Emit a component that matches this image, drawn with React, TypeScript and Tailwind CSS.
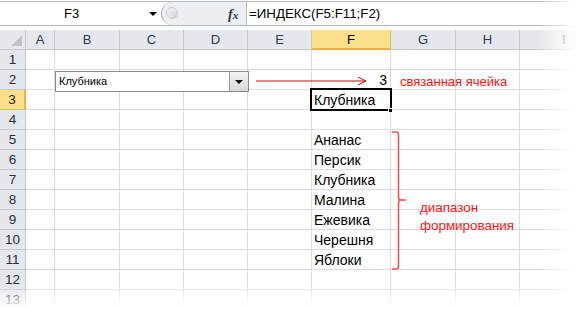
import React from 'react';

const widths = ['w-[26px]', 'w-[29px]', 'w-[65px]', 'w-[64px]', 'w-[64px]', 'w-[64px]', 'w-[79px]', 'w-[65px]', 'w-[64px]', 'flex-1'];
const cols = ['A', 'B', 'C', 'D', 'E', 'F', 'G', 'H', 'I'];
const fvals: Record<number, string> = {
  3: 'Клубника',
  5: 'Ананас',
  6: 'Персик',
  7: 'Клубника',
  8: 'Малина',
  9: 'Ежевика',
  10: 'Черешня',
  11: 'Яблоки',
};

function HeaderRow() {
  return (
    <div className="flex h-[20px] shrink-0">
      <div className={`${widths[0]} shrink-0 h-full bg-[#e4e7ec] border-r border-b border-[#c5cad1] relative`}>
        <div className="absolute right-[3px] bottom-[3px] w-0 h-0 border-l-[11px] border-l-transparent border-b-[11px] border-b-[#c0c4ca]" />
      </div>
      {cols.map((c, i) => (
        <div
          key={c}
          className={`${widths[i + 1]} shrink-0 h-full flex items-center justify-center text-[13px] ${
            c === 'F'
              ? 'bg-[#fbdf8a] border-b-2 border-b-[#f0b040] border-r border-r-[#e2bd6a]'
              : 'bg-[#e4e7ec] border-r border-b border-[#c5cad1] text-[#2f3a4a]'
          } ${c === 'I' ? 'justify-start pl-[42px]' : ''}`}
        >
          <span className="mt-[1px]">{c}</span>
        </div>
      ))}
    </div>
  );
}

function Row({ n }: { n: number }) {
  const sel = n === 3;
  return (
    <div className="flex h-[20px] shrink-0">
      <div
        className={`${widths[0]} shrink-0 h-full flex items-center justify-center text-[13.5px] pt-[1px] ${
          sel
            ? 'bg-[#fbdf8a] border-r-2 border-r-[#f0b040] border-b border-b-[#e2bd6a] text-[#222]'
            : 'bg-[#e4e7ec] border-r border-b border-[#c5cad1] text-[#2a2f38]'
        }`}
      >
        {n}
      </div>
      {cols.map((c, i) => (
        <div
          key={c}
          className={`${widths[i + 1]} shrink-0 h-full border-r border-b border-[#dadcdf] flex items-center pt-[2px] text-[14px] text-black overflow-visible whitespace-nowrap ${
            c === 'F' && n === 2 ? 'justify-end pr-[3px]' : 'pl-[2px]'
          }`}
        >
          {c === 'F' && n === 2 ? '3' : c === 'F' ? fvals[n] ?? '' : ''}
        </div>
      ))}
    </div>
  );
}

export default function App() {
  return (
    <div className="relative w-[576px] h-[309px] overflow-hidden bg-white font-['Liberation_Sans',_Arial,_sans-serif]">
      {/* formula bar */}
      <div className="h-[30px] flex flex-col">
        <div className="h-[1px] bg-white" />
        <div className="h-[25px] flex border-t border-b border-[#b4bac3]">
          <div className="w-[161px] shrink-0 bg-white flex items-center relative">
            <span className="absolute left-[64px] text-[13px] text-black">F3</span>
            <div className="absolute left-[149px] top-[10px] w-0 h-0 border-l-[4px] border-r-[4px] border-t-[4px] border-l-transparent border-r-transparent border-t-black" />
          </div>
          <div className="w-[85px] shrink-0 bg-[#eceff2] rounded-l-[12px] border-l border-[#a8afb8] relative flex items-center">
            <div className="absolute left-[4px] top-[5px] w-[12px] h-[12px] rounded-full bg-gradient-to-br from-[#f4f5f7] to-[#cfd3d9] border border-[#c8ccd2]" />
            <span className="absolute left-[66px] top-[2px] font-['Liberation_Serif',_serif] italic font-bold text-[14px] text-[#333]">
              f<span className="text-[11px]">x</span>
            </span>
          </div>
          <div className="flex-1 bg-white border-l border-[#b4bac3] flex items-center pl-[2px] text-[13.3px] text-black">
            =ИНДЕКС(F5:F11;F2)
          </div>
        </div>
        <div className="flex-1 bg-white" />
      </div>

      {/* grid */}
      <div className="flex flex-col">
        <HeaderRow />
        {Array.from({ length: 13 }, (_, k) => (
          <Row key={k} n={k + 1} />
        ))}
      </div>

      {/* active cell border */}
      <div className="absolute left-[310px] top-[88px] w-[82px] h-[23px] border-2 border-black pointer-events-none" />
      <div className="absolute left-[388px] top-[108px] w-[5px] h-[5px] bg-black border border-white" />

      {/* combobox */}
      <div className="absolute left-[55px] top-[71px] w-[194px] h-[21px] bg-white border border-[#8a8a8a] flex items-center">
        <span className="pl-[3px] text-[11px] text-black">Клубника</span>
        <div className="absolute right-[0px] top-[0px] w-[19px] h-[19px] bg-gradient-to-b from-[#f4f4f4] to-[#d8d8d8] border-l border-[#9a9a9a] flex items-center justify-center">
          <div className="w-0 h-0 border-l-[4px] border-r-[4px] border-t-[4px] border-l-transparent border-r-transparent border-t-black" />
        </div>
      </div>

      {/* arrow */}
      <svg className="absolute left-[250px] top-[74px]" width="125" height="16" viewBox="0 0 125 16">
        <line x1="6" y1="7" x2="116" y2="7" stroke="#d40000" strokeWidth="1" />
        <polyline points="108,3 116,7 108,11" fill="none" stroke="#d40000" strokeWidth="1" />
      </svg>
      <div className="absolute left-[400px] top-[72px] text-[13px] text-[#ff1414]">связанная ячейка</div>

      {/* bracket */}
      <svg className="absolute left-[388px] top-[128px]" width="24" height="146" viewBox="0 0 24 146">
        <path
          d="M4 4 H8 Q10.5 4 10.5 7 V69 Q10.5 72 13 72 H18 M13 72 Q10.5 72 10.5 75 V138 Q10.5 141 8 141 H4"
          fill="none"
          stroke="#ff4a4a"
          strokeWidth="1.5"
        />
      </svg>
      <div className="absolute left-[420px] top-[199px] text-[13.4px] leading-[18px] text-[#ff1414]">
        диапазон
        <br />
        формирования
      </div>

      {/* fades */}
      <div className="absolute right-0 top-0 bottom-0 w-[40px] bg-gradient-to-r from-transparent to-white pointer-events-none" />
      <div className="absolute left-0 right-0 bottom-0 h-[24px] bg-gradient-to-b from-transparent to-white pointer-events-none" />
    </div>
  );
}
